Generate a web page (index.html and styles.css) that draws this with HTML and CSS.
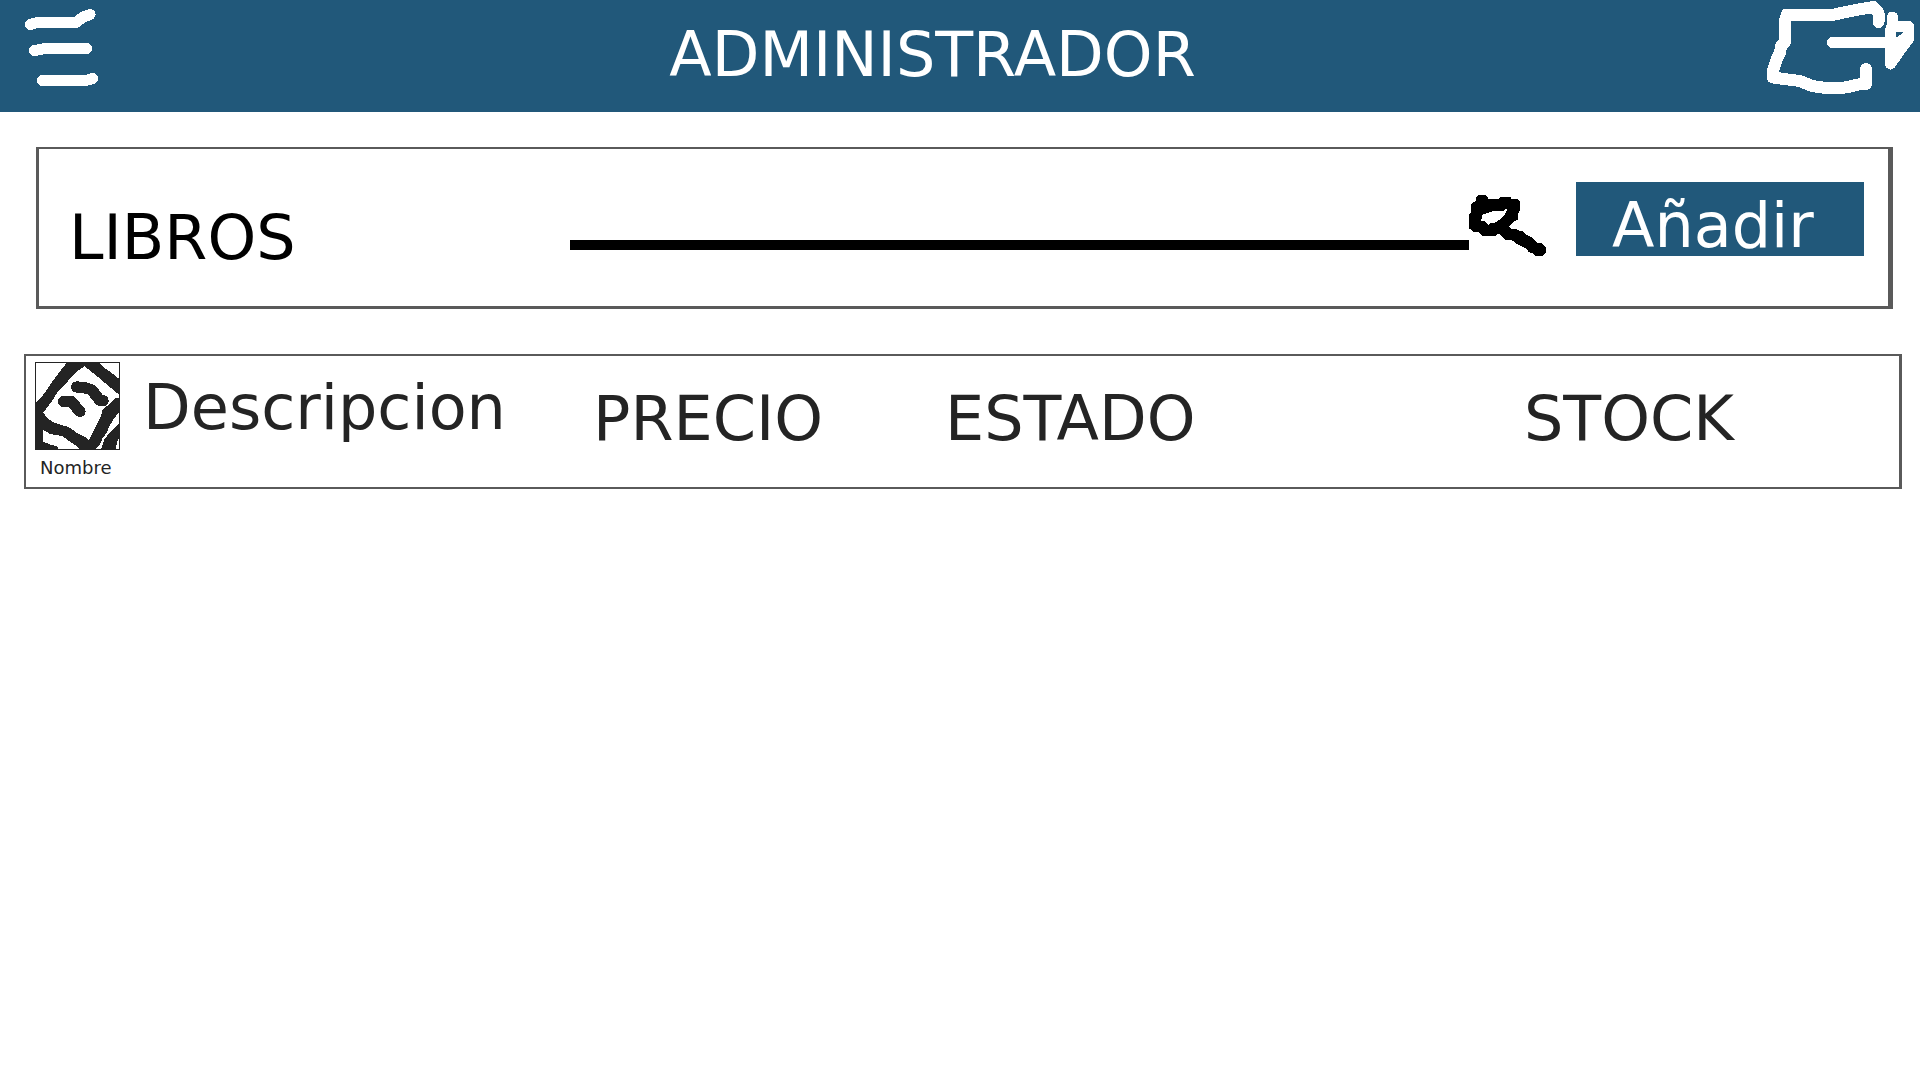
FILE: index.html
```html
<!DOCTYPE html>
<html lang="es">
<head>
<meta charset="utf-8">
<meta name="viewport" content="width=device-width, initial-scale=1">
<title>Administrador</title>
<link rel="stylesheet" href="styles.css">
</head>
<body>
<header class="topbar">
  <button class="icon-button" type="button" aria-label="Menú">
    <svg class="sketch" width="73" height="112" viewBox="25 0 73 112">
      <path d="M30.500 24.500L37 22.500H76L83 17L90 14.500M34.500 50.500L45 48.500H86.500M42.500 80.500H86L92.500 78.500"/>
    </svg>
  </button>
  <h1 class="title">ADMINISTRADOR</h1>
  <button class="icon-button" type="button" aria-label="Salir">
    <svg class="sketch" width="147" height="112" viewBox="17 0 147 112">
      <path class="door" d="M128.500 22V13L123.500 7L111 9L101 11L91 13L85 14.500H37L35 20V42L31 46L30 53L27 58L25 65L23 71V77.500L34 79L50 81L62 86L76 88H92L100 86.500L108 84.500L116 84V69"/>
      <path d="M82.500 42.500H147M142.500 17V24L140.500 30V64L150 50L158.500 39V26.500H142M147 45L156 37"/>
    </svg>
  </button>
</header>
<main>
  <section class="toolbar">
    <h2 class="heading">LIBROS</h2>
    <form class="search">
      <input class="search-input" type="text" aria-label="Buscar libros">
      <button class="icon-button" type="button" aria-label="Buscar">
        <svg class="glass" width="77" height="74" viewBox="87 36 231 222">
          <path fill-rule="evenodd" d="M108 84L116 75H135L144 84V87H176L184 80H210L214 86H230L240 96V122L234 132V148L222 154L206 170L214 177H230L240 184H250L258 194L270 199L284 209L290 218H302L318 232V246L306 258H286L276 249L264 246L262 238L246 230L230 222L214 209H196L176 191L166 197H128L116 187L100 185L87 175V132L93 126V102L108 92ZM126 135L162 122H190L201 115V122L194 132V136L178 150L164 158H152L146 164L134 154L120 151L126 146Z"/>
        </svg>
      </button>
    </form>
    <button class="add" type="button">Añadir</button>
  </section>
  <table class="books">
    <tbody>
      <tr class="book">
        <td class="cover">
          <svg class="cover-image" width="85" height="88" viewBox="45 51 255 264" role="img" aria-label="Portada">
            <rect class="ink" x="45" y="51" width="255" height="264"/>
            <path class="paper" d="M48 54H140L116 84L96 111L81 134L66 154L48 172ZM238 54H297V101L268 79L252 68ZM192 63L213 79L238 99L263 121L297 149V159L283 161L268 177L248 194L243 214L233 234L223 254L213 274L206 285L196 277L171 264L146 246L126 241L101 232L81 219L70 202L96 169L111 144L131 124L151 99L171 79L186 69ZM69 255L91 267L126 273L146 287L171 304L179 312H116L111 304L86 297L69 289ZM297 202V234L283 249L268 264L253 284L243 312H228L238 301L248 279L260 264L268 244L283 219ZM297 279V312H288L290 295Z"/>
            <path class="squiggle" d="M170 126L198 129L216 135L228 152L240 166L249 167M131 170H154L168 186L180 199"/>
          </svg>
          <span class="cover-name">Nombre</span>
        </td>
        <td class="description">Descripcion</td>
        <td class="value">PRECIO</td>
        <td class="value">ESTADO</td>
        <td class="value">STOCK</td>
      </tr>
    </tbody>
  </table>
</main>
</body>
</html>
```
FILE: styles.css
```css
* {
  box-sizing: border-box;
}

body {
  margin: 0;
  background: #fff;
  color: #000;
  font-family: "DejaVu Sans", sans-serif;
  font-size: 62px;
  line-height: 72px;
}

svg {
  display: block;
  shape-rendering: crispEdges;
}

.icon-button {
  flex: none;
  padding: 0;
  border: 0;
  background: none;
  cursor: pointer;
}

.topbar {
  display: flex;
  justify-content: space-between;
  align-items: flex-start;
  padding: 0 6px 0 25px;
  background: #21587a;
  color: #fff;
}

.title,
.heading {
  margin: 0;
  font-size: inherit;
  font-weight: normal;
}

.title {
  padding-top: 19px;
}

.sketch {
  fill: none;
  stroke: #fff;
  stroke-width: 11px;
  stroke-linecap: round;
  stroke-linejoin: round;
}

.door {
  stroke-width: 12px;
}

.toolbar {
  display: grid;
  grid-template-columns: 501fr 1006fr 288fr;
  align-items: start;
  margin: 35px 27px 0 36px;
  padding: 33px 24px 50px 30px;
  border: solid #5a5a5a;
  border-width: 2px 5px 3px 3px;
}

.heading {
  height: 74px;
  padding-top: 20px;
}

.search {
  display: flex;
  align-items: flex-start;
  padding-right: 30px;
}

.search-input {
  flex: 1;
  min-width: 0;
  height: 68px;
  padding: 0;
  border: 0;
  border-bottom: 10px solid #000;
  outline: 0;
  background: none;
  font: inherit;
  font-size: 40px;
}

.add {
  height: 74px;
  padding: 14px 0 0 36px;
  border: 0;
  background: #21587a;
  color: #fff;
  font: inherit;
  line-height: 60px;
  text-align: left;
  cursor: pointer;
}

.books {
  display: block;
  margin: 45px 18px 0 24px;
  border: solid #5a5a5a;
  border-width: 2px 3px 2px 2px;
  color: #242424;
}

.books tbody {
  display: block;
}

.book {
  display: grid;
  grid-template-columns: 117px 450fr 352fr 579fr 375fr;
}

.book td {
  padding: 0;
}

.book .cover {
  padding: 6px 0 7px 9px;
}

.cover-name {
  display: block;
  padding: 6px 0 0 5px;
  font-size: 18px;
  line-height: 24px;
}

.book .description {
  padding-top: 16px;
}

.book .value {
  padding-top: 27px;
}

.ink {
  fill: #242424;
}

.paper {
  fill: #fff;
}

.squiggle {
  fill: none;
  stroke: #242424;
  stroke-width: 34px;
  stroke-linecap: round;
  stroke-linejoin: round;
}
```
